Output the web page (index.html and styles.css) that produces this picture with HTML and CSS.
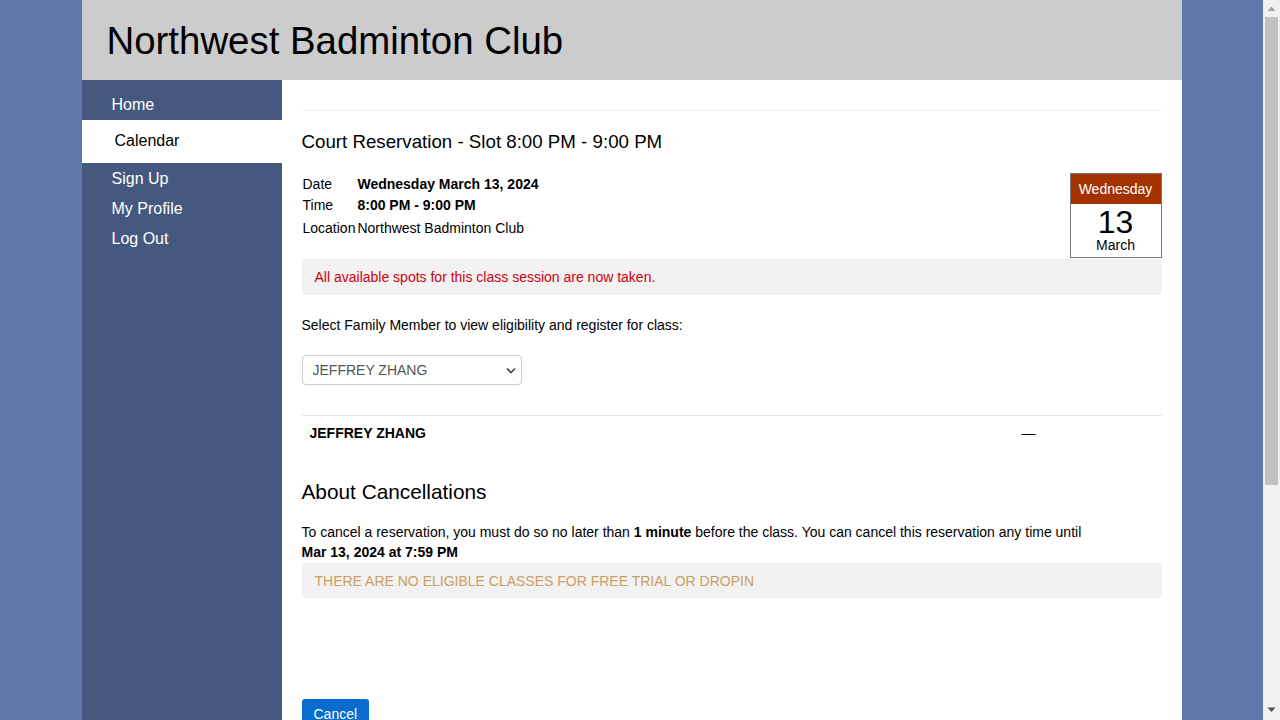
FILE: index.html
```html
<!DOCTYPE html>
<html>
<head>
<meta charset="utf-8">
<title>Northwest Badminton Club</title>
<link rel="stylesheet" href="styles.css">
</head>
<body>
<div class="wrap">
  <header class="site-header">
    <h1 class="site-title">Northwest Badminton Club</h1>
  </header>
  <div class="main">
    <nav class="sidebar">
      <a class="nav-item nav-home" href="#">Home</a>
      <a class="nav-item nav-active" href="#">Calendar</a>
      <a class="nav-item" href="#">Sign Up</a>
      <a class="nav-item" href="#">My Profile</a>
      <a class="nav-item" href="#">Log Out</a>
    </nav>
    <main class="content">
      <div class="rule-top"></div>
      <h2 class="heading">Court Reservation - Slot 8:00 PM - 9:00 PM</h2>
      <div class="detail-row">
        <table class="details">
          <tr><td class="lbl">Date</td><td class="val"><b>Wednesday March 13, 2024</b></td></tr>
          <tr><td class="lbl">Time</td><td class="val"><b>8:00 PM - 9:00 PM</b></td></tr>
          <tr><td class="lbl">Location</td><td class="val">Northwest Badminton Club</td></tr>
        </table>
        <div class="cal">
          <div class="cal-day">Wednesday</div>
          <div class="cal-num">13</div>
          <div class="cal-month">March</div>
        </div>
      </div>
      <div class="notice notice-red">All available spots for this class session are now taken.</div>
      <p class="select-label">Select Family Member to view eligibility and register for class:</p>
      <div class="select-wrap">
        <select class="member-select"><option>JEFFREY ZHANG</option></select>
        <svg class="chev" width="10" height="7" viewBox="0 0 10 7"><path d="M1 1.5 L5 5.5 L9 1.5" fill="none" stroke="#444" stroke-width="1.6"/></svg>
      </div>
      <div class="member-row">
        <div class="member-name">JEFFREY ZHANG</div>
        <div class="member-status">—</div>
      </div>
      <h2 class="heading heading-cancel">About Cancellations</h2>
      <p class="cancel-text">To cancel a reservation, you must do so no later than <b>1 minute</b> before the class. You can cancel this reservation any time until<br><b>Mar 13, 2024 at 7:59 PM</b></p>
      <div class="notice notice-tan">THERE ARE NO ELIGIBLE CLASSES FOR FREE TRIAL OR DROPIN</div>
      <button class="btn-cancel">Cancel</button>
    </main>
  </div>
</div>
<div class="scrollbar">
  <svg class="sb-arrow sb-up" width="9" height="6" viewBox="0 0 9 6"><path d="M4.5 0.5 L8.5 5 L0.5 5 Z" fill="#a3a3a3"/></svg>
  <div class="sb-thumb"></div>
  <svg class="sb-arrow sb-down" width="9" height="6" viewBox="0 0 9 6"><path d="M0.5 0.5 L8.5 0.5 L4.5 5 Z" fill="#505050"/></svg>
</div>
</body>
</html>
```
FILE: styles.css
```css
html, body {
  margin: 0;
  padding: 0;
}
html {
  scrollbar-width: none;
}
body {
  background: #5e78ae;
  font-family: "Liberation Sans", Arial, sans-serif;
  font-size: 14px;
  line-height: 20px;
  color: #000;
  margin-right: 17px;
}
.wrap {
  width: 1100px;
  margin: 0 auto;
}
.site-header {
  background: #cccccc;
  height: 80px;
}
.site-title {
  margin: 0;
  padding-left: 25px;
  font-size: 38.4px;
  font-weight: normal;
  line-height: 82px;
  color: #000;
}
.main {
  display: flex;
  min-height: 980px;
}
.sidebar {
  width: 200px;
  flex: none;
  background: #45597f;
  display: flex;
  flex-direction: column;
}
.nav-item {
  display: block;
  color: #fff;
  text-decoration: none;
  font-size: 16px;
  line-height: 20px;
  padding: 5px 0 5px 30px;
}
.nav-home {
  padding-top: 15px;
}
.nav-active {
  background: #fff;
  color: #000;
  padding: 11px 0 12px 33px;
}
.nav-active + .nav-item {
  padding-top: 6px;
  padding-bottom: 5px;
}
.content {
  flex: 1;
  background: #fff;
  padding: 0 20px;
}
.rule-top {
  margin-top: 30px;
  border-top: 1px solid #eeeeee;
}
.heading {
  margin: 19px 0 0;
  font-size: 18.72px;
  font-weight: normal;
  line-height: 24px;
}
.detail-row {
  display: flex;
  justify-content: space-between;
  align-items: flex-start;
  margin-top: 19px;
}
.details {
  border-collapse: collapse;
  margin-top: 1px;
}
.details td {
  padding: 0;
  line-height: 21px;
  vertical-align: top;
}
.details td.lbl {
  padding: 0 2px 0 1px;
}
.details tr:last-child td {
  padding-top: 2px;
}
.cal {
  width: 90px;
  border: 1px solid #777;
  text-align: center;
  height: 83px;
}
.cal-day {
  background: #a33200;
  color: #fff;
  height: 30px;
  line-height: 30px;
}
.cal-num {
  font-size: 32px;
  line-height: 34px;
  padding-top: 1px;
}
.cal-month {
  line-height: 12px;
}
.notice {
  background: #f2f2f2;
  border-radius: 4px;
  padding: 8px 13px;
  line-height: 20px;
}
.notice-red {
  color: #cc0011;
  margin-top: 1px;
}
.notice-tan {
  color: #c9a064;
  margin-top: 1px;
  padding-bottom: 7px;
}
.select-label {
  margin: 20px 0 0;
}
.select-wrap {
  position: relative;
  width: 220px;
  margin-top: 20px;
}
.member-select {
  appearance: none;
  -webkit-appearance: none;
  width: 220px;
  height: 30px;
  border: 1px solid #cccccc;
  border-radius: 4px;
  background: #fff;
  color: #555;
  font-family: "Liberation Sans", Arial, sans-serif;
  font-size: 14px;
  padding: 0 10px;
  display: block;
}
.chev {
  position: absolute;
  left: 204px;
  top: 12px;
  pointer-events: none;
}
.member-row {
  display: grid;
  grid-template-columns: 720px 140px;
  border-top: 1px solid #e5e5e5;
  margin-top: 30px;
}
.member-name {
  font-weight: bold;
  padding: 7px 8px;
}
.member-status {
  padding: 7px 0;
}
.heading-cancel {
  margin-top: 30px;
  font-size: 20.8px;
}
.cancel-text {
  margin: 18px 0 0;
}
.btn-cancel {
  margin-top: 101px;
  display: block;
  background: #0a6ccf;
  color: #fff;
  border: none;
  border-radius: 3px;
  font-family: "Liberation Sans", Arial, sans-serif;
  font-size: 14px;
  line-height: 20px;
  padding: 5px 12px;
}
.scrollbar {
  position: fixed;
  top: 0;
  right: 0;
  width: 17px;
  height: 100%;
  background: #f1f1f1;
}
.sb-thumb {
  position: absolute;
  left: 2px;
  width: 13px;
  top: 17px;
  height: 468px;
  background: #c1c1c1;
}
.sb-arrow {
  position: absolute;
  left: 4px;
}
.sb-up {
  top: 6px;
}
.sb-down {
  bottom: 7px;
}
```
